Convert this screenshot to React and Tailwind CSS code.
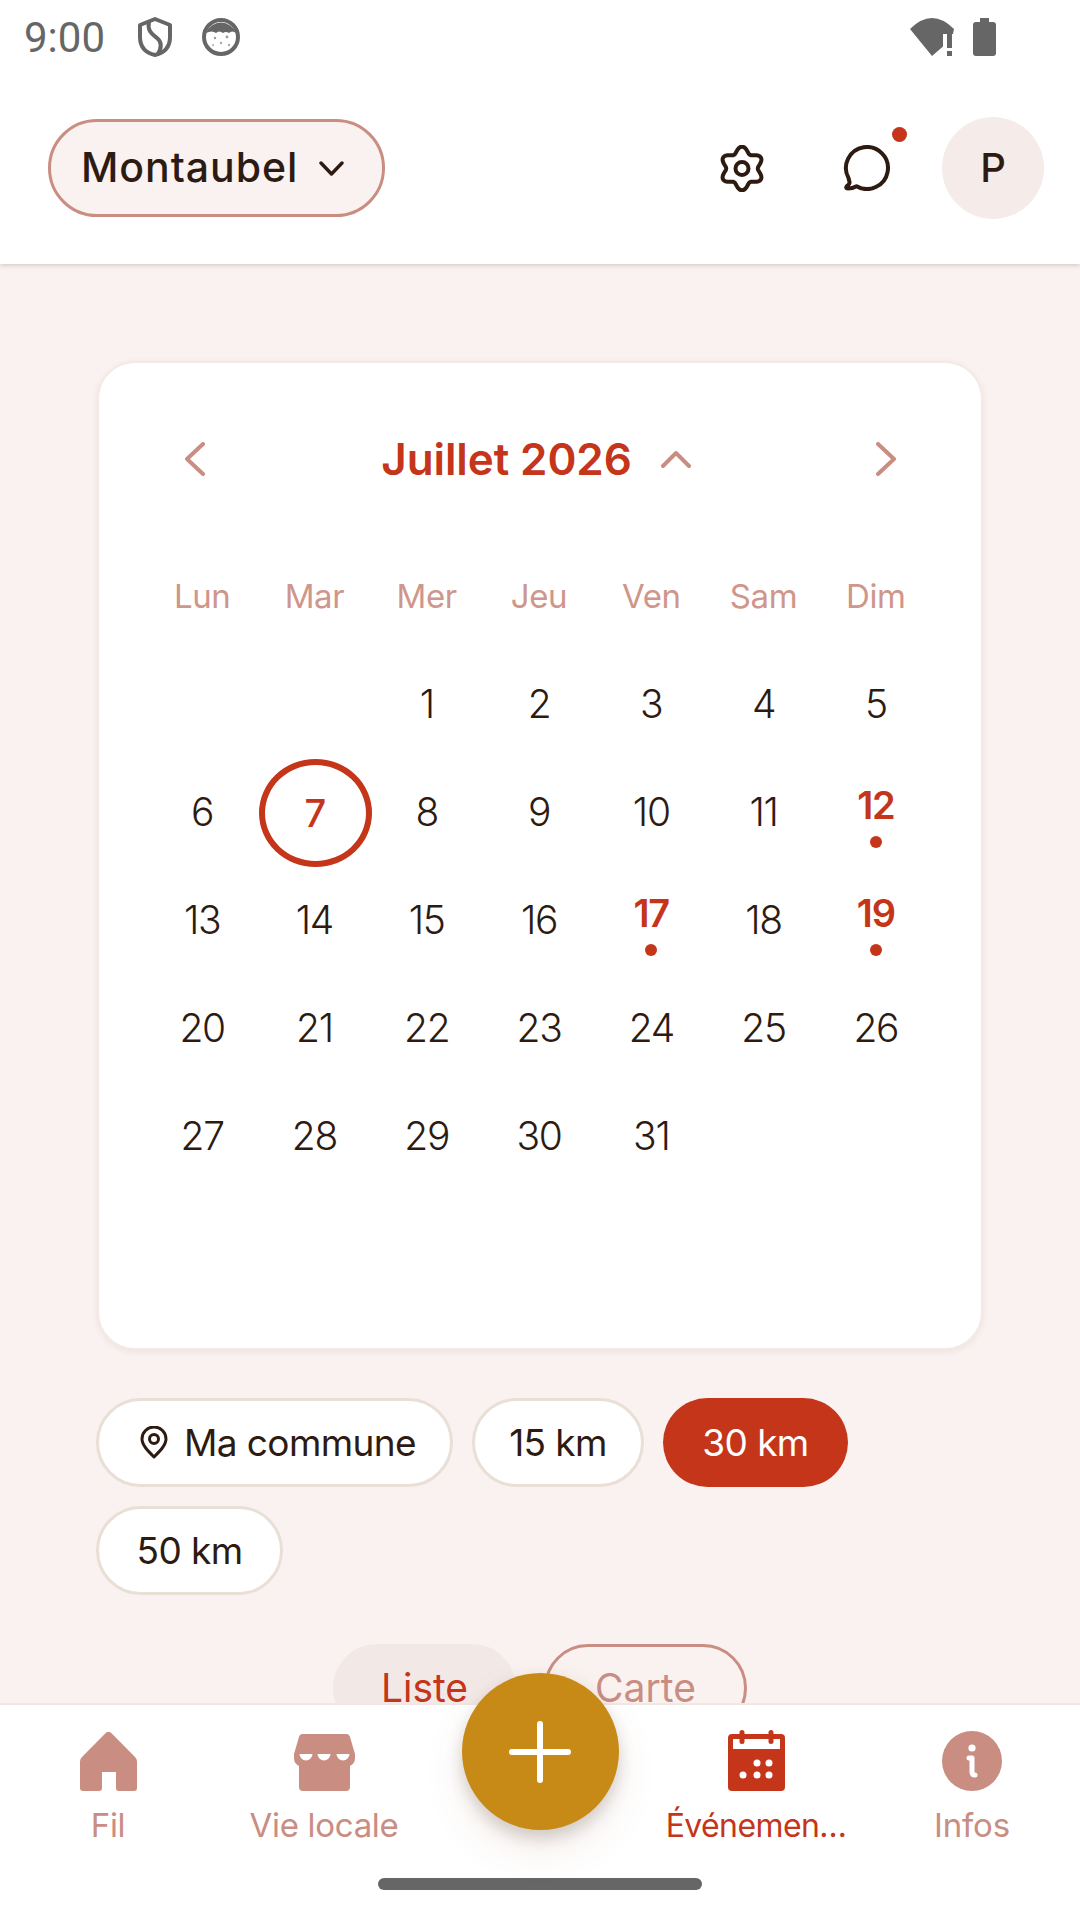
import React from "react";

const gearPath = (() => {
  const pts = [];
  for (let i = 0; i <= 180; i++) {
    const t = (i / 180) * Math.PI * 2;
    const r = 18.8 + 3 * Math.cos(6 * t);
    const x = 23 + r * Math.sin(t);
    const y = 23.5 - r * Math.cos(t);
    pts.push(`${i === 0 ? "M" : "L"}${x.toFixed(2)} ${y.toFixed(2)}`);
  }
  return pts.join("") + "Z";
})();

const weeks = [
  ["", "", 1, 2, 3, 4, 5],
  [6, 7, 8, 9, 10, 11, 12],
  [13, 14, 15, 16, 17, 18, 19],
  [20, 21, 22, 23, 24, 25, 26],
  [27, 28, 29, 30, 31, "", ""],
];
const events = [12, 17, 19];
const wd = ["Lun", "Mar", "Mer", "Jeu", "Ven", "Sam", "Dim"];

function Day({ d }) {
  if (d === "") return <div className="h-[108px]" />;
  if (d === 7)
    return (
      <div className="h-[108px] flex items-center justify-center">
        <div className="ml-[2px] shrink-0 w-[113px] h-[108px] rounded-[50%] border-[6px] border-[#c4351a] flex items-center justify-center text-[38px] font-medium text-[#c4351a]">7</div>
      </div>
    );
  if (events.includes(d))
    return (
      <div className="h-[108px] flex flex-col items-center justify-center pt-[4px]">
        <div className="h-[46px] leading-[46px] text-[38px] font-semibold text-[#c4351a] tracking-[-1.2px]">{d}</div>
        <div className="mt-[8px] w-[12px] h-[12px] rounded-full bg-[#c4351a]" />
      </div>
    );
  return (
    <div className="h-[108px] pb-[1px] flex items-center justify-center text-[39px] font-light text-[#2d1b12] tracking-[-1.3px]">{d}</div>
  );
}

function Chip({ children, active, className }) {
  return (
    <div
      className={
        (active
          ? "h-[89px] rounded-full bg-[#c4351a] text-white flex items-center text-[37px] tracking-[-0.6px] "
          : "h-[89px] rounded-full bg-white border-[3px] border-[#e9dfd6] text-[#2d1b12] flex items-center text-[37px] tracking-[-0.6px] ") + className
      }
    >
      {children}
    </div>
  );
}

function NavItem({ icon, label, color, size }) {
  return (
    <div className="w-[216px] flex flex-col items-center">
      <div className="h-[62px] flex items-end">{icon}</div>
      <div className={"leading-[40px] whitespace-nowrap " + color + " " + size}>{label}</div>
    </div>
  );
}

export default function App() {
  return (
    <div className="relative w-[1080px] h-[1920px] overflow-hidden flex flex-col bg-[#faf2f0] [font-family:Inter,sans-serif]">
      {/* Header */}
      <div className="relative z-10 bg-white h-[264px] shrink-0 shadow-[0_2px_4px_rgba(60,30,20,0.16)]">
        <div className="h-[72px] flex items-center justify-between pl-[24px] pr-[84px] pt-[2px]">
          <div className="flex items-center">
            <span className="text-[42px] text-[#666666] [font-family:Roboto,sans-serif]">9:00</span>
            <svg className="ml-[33px]" width="34" height="40" viewBox="0 0 34 40" fill="none" stroke="#666" strokeWidth="4" strokeLinejoin="round">
              <path d="M17 2 L32 8 V20 C32 30 26 36 17 38 C8 36 2 30 2 20 V8Z" />
              <path d="M11 5 C9 14 14 17 19 21 C24 25 24 30 20 37" />
            </svg>
            <svg className="ml-[30px]" width="38" height="38" viewBox="0 0 38 38">
              <circle cx="19" cy="19" r="17" fill="none" stroke="#666" strokeWidth="4" />
              <path d="M4 15 A16 16 0 0 1 34 15 Q30 12 27 15 Q24 13 21 15 Q17 12 14 15 Q10 12 4 15Z" fill="#666" />
              <circle cx="13" cy="20" r="1.2" fill="#999" /><circle cx="25" cy="19" r="1.4" fill="#a98" />
              <circle cx="19" cy="25" r="1.2" fill="#aaa" /><circle cx="11" cy="27" r="1" fill="#aaa" />
              <circle cx="27" cy="27" r="1.2" fill="#aaa" />
            </svg>
          </div>
          <div className="flex items-center">
            <svg width="44" height="38" viewBox="0 0 44 38">
              <path d="M0 11 Q22 -11 44 11 L43 16 H33 V28.5 L22 38Z" fill="#666" />
              <rect x="37" y="16" width="5" height="14" fill="#666" />
              <rect x="37" y="33" width="5" height="5" fill="#666" />
            </svg>
            <svg className="ml-[19px]" width="23" height="38" viewBox="0 0 23 38">
              <path d="M7 0H16V4H20a3 3 0 0 1 3 3V35a3 3 0 0 1-3 3H3a3 3 0 0 1-3-3V7a3 3 0 0 1 3-3H7Z" fill="#666" />
            </svg>
          </div>
        </div>
        <div className="h-[192px] flex items-center pl-[48px] pr-[36px]">
          <div className="h-[98px] w-[337px] rounded-full bg-[#faf2f0] border-[3px] border-[#c98d82] flex items-center pl-[30px]">
            <span className="text-[41px] font-medium text-[#2d1b12] tracking-[0.95px]">Montaubel</span>
            <svg className="ml-[21px]" width="25" height="15" viewBox="0 0 25 15" fill="none" stroke="#2d1b12" strokeWidth="3.4" strokeLinecap="round" strokeLinejoin="round">
              <path d="M2 2 L12.5 13 L23 2" />
            </svg>
          </div>
          <div className="flex-1" />
          <svg className="mr-[78px]" width="46" height="47" viewBox="0 0 46 47" fill="none" stroke="#2d1b12" strokeWidth="4">
            <path d={gearPath} strokeLinejoin="round" />
            <circle cx="23" cy="23.5" r="6.5" />
          </svg>
          <div className="relative mr-[51px]">
            <svg className="block" width="48" height="46" viewBox="0 0 48 46" fill="none" stroke="#2d1b12" strokeWidth="4" strokeLinejoin="round">
              <path d="M13.5 41.2 A21 21 0 1 0 5.5 33 L6.5 37 Q7 39 4 41 Q2 43.5 5 43.5 Q9.5 43.5 13.5 41.2Z" />
            </svg>
            <div className="absolute w-[15px] h-[15px] rounded-full bg-[#c4351a] left-[49px] top-[-18px]" />
          </div>
          <div className="w-[102px] h-[102px] rounded-full bg-[#f5ecea] flex items-center justify-center text-[40px] font-medium text-[#2d1b12]">P</div>
        </div>
      </div>

      {/* Content */}
      <div className="flex-1 min-h-0 overflow-hidden pt-[97px] pl-[96px] pr-[97px]">
        <div className="ml-[1px] w-[886px] h-[989px] bg-white rounded-[38px] border-[2px] border-[#f3e9e6] shadow-[0_2px_6px_rgba(90,50,30,0.08)] pl-[47px] pr-[49px] pt-[42px]">
          <div className="h-[108px] flex items-center justify-between">
            <div className="w-[98px] flex justify-center">
              <svg width="20" height="34" viewBox="0 0 20 34" fill="none" stroke="#c98d82" strokeWidth="4" strokeLinecap="round" strokeLinejoin="round">
                <path d="M18 2 L2 17 L18 32" />
              </svg>
            </div>
            <div className="flex items-center mr-[9px]">
              <span className="text-[44px] font-semibold text-[#c4351a] tracking-[-0.1px]">Juillet 2026</span>
              <svg className="ml-[29px]" width="30" height="18" viewBox="0 0 30 18" fill="none" stroke="#c98d82" strokeWidth="4" strokeLinecap="round" strokeLinejoin="round">
                <path d="M2 16 L15 3 L28 16" />
              </svg>
            </div>
            <div className="w-[98px] -mr-[3px] flex justify-center">
              <svg width="20" height="34" viewBox="0 0 20 34" fill="none" stroke="#c98d82" strokeWidth="4" strokeLinecap="round" strokeLinejoin="round">
                <path d="M2 2 L18 17 L2 32" />
              </svg>
            </div>
          </div>
          <div className="mt-[30px] grid grid-cols-7">
            {wd.map((w) => (
              <div key={w} className="h-[108px] flex items-center justify-center text-[33px] text-[#cf968b] tracking-[-0.4px]">{w}</div>
            ))}
            {weeks.flat().map((d, i) => (
              <Day key={i} d={d} />
            ))}
          </div>
        </div>

        <div className="mt-[48px] flex flex-wrap gap-x-[19px] gap-y-[19px] w-[860px]">
          <Chip className="w-[357px] pl-[41px]">
            <svg className="mr-[16px] shrink-0" width="28" height="33" viewBox="0 0 28 33" fill="none" stroke="#2d1b12" strokeWidth="3">
              <path d="M14 31 C8 25 2 19 2 13 A12 12 0 0 1 26 13 C26 19 20 25 14 31Z" strokeLinejoin="round" />
              <circle cx="14" cy="13" r="4.5" />
            </svg>
            Ma commune
          </Chip>
          <Chip className="w-[172px] justify-center">15 km</Chip>
          <Chip active className="w-[185px] justify-center">30 km</Chip>
          <Chip className="w-[187px] justify-center">50 km</Chip>
        </div>

        <div className="mt-[49px] flex justify-center items-start gap-[28px] w-[888px]">
          <div className="w-[183px] h-[88px] rounded-full bg-[#f2e9e6] flex items-center justify-center text-[39px] text-[#c4351a]">Liste</div>
          <div className="w-[203px] h-[88px] rounded-full border-[3px] border-[#c98d82] flex items-center justify-center text-[39px] text-[#c98d82]">Carte</div>
        </div>
      </div>

      {/* Bottom nav */}
      <div className="relative z-10 h-[217px] shrink-0 bg-white border-t-[2px] border-[#f1e7e3] flex items-start pt-[24px]">
        <NavItem
          color="text-[#c98d82]"
          size="mt-[14px] text-[33px] tracking-[-0.4px]"
          label="Fil"
          icon={
            <svg width="57" height="59" viewBox="0 0 57 59">
              <path fill="#c98d82" d="M25.5 1.2a4 4 0 0 1 6 0L55 25a6 6 0 0 1 2 4.5V56a3 3 0 0 1-3 3H39a3 3 0 0 1-3-3V40H22v16a3 3 0 0 1-3 3H3a3 3 0 0 1-3-3V29.5A6 6 0 0 1 2 25Z" />
            </svg>
          }
        />
        <NavItem
          color="text-[#c98d82]"
          size="mt-[14px] text-[33px] tracking-[-0.3px]"
          label="Vie locale"
          icon={
            <svg width="61" height="57" viewBox="0 0 61 57">
              <path fill="#c98d82" d="M9 0H52a4 4 0 0 1 4 3L61 20v4a9 9 0 0 1-5 8V53a4 4 0 0 1-4 4H9a4 4 0 0 1-4-4V32a9 9 0 0 1-5-8V20L5 3a4 4 0 0 1 4-3Z" />
              <path fill="#fff" d="M5.5 20h13a6.5 6.5 0 0 1-13 0ZM23.5 20h13a6.5 6.5 0 0 1-13 0ZM42.5 20h13a6.5 6.5 0 0 1-13 0Z" />
            </svg>
          }
        />
        <div className="w-[216px]" />
        <NavItem
          color="text-[#c4351a]"
          size="mt-[15px] text-[32px] tracking-[-0.6px]"
          label="Événemen…"
          icon={
            <svg width="57" height="61" viewBox="0 0 57 61">
              <rect x="0" y="4" width="57" height="57" rx="4" fill="#c4351a" />
              <rect x="5" y="9" width="47" height="10" fill="#fff" />
              <rect x="11.5" y="0" width="5" height="14" rx="2.5" fill="#c4351a" />
              <rect x="40.5" y="0" width="5" height="14" rx="2.5" fill="#c4351a" />
              <g fill="#fff">
                <circle cx="29" cy="33" r="3.5" /><circle cx="41" cy="33" r="3.5" />
                <circle cx="15" cy="45" r="3.5" /><circle cx="29" cy="45" r="3.5" /><circle cx="41" cy="45" r="3.5" />
              </g>
            </svg>
          }
        />
        <NavItem
          color="text-[#c98d82]"
          size="mt-[14px] text-[33px] tracking-[-0.2px]"
          label="Infos"
          icon={
            <svg width="60" height="60" viewBox="0 0 60 60">
              <circle cx="30" cy="30" r="30" fill="#c98d82" />
              <circle cx="30" cy="17" r="3.6" fill="#fff" />
              <path d="M27 27h3v14q0 3 3 3" fill="none" stroke="#fff" strokeWidth="5" strokeLinecap="round" strokeLinejoin="round" />
            </svg>
          }
        />
        <div className="absolute left-[378px] top-[173px] w-[324px] h-[12px] rounded-full bg-[#666666]" />
      </div>

      {/* FAB */}
      <div className="absolute z-20 left-[462px] top-[1673px] w-[157px] h-[157px] rounded-full bg-[#c88a16] shadow-[0_8px_16px_rgba(60,40,20,0.2),0_20px_40px_rgba(160,90,60,0.1)] flex items-center justify-center">
        <svg className="mr-[2px]" width="62" height="62" viewBox="0 0 62 62" fill="none" stroke="#fff" strokeWidth="6" strokeLinecap="round">
          <path d="M31 3V59M3 31H59" />
        </svg>
      </div>
    </div>
  );
}
